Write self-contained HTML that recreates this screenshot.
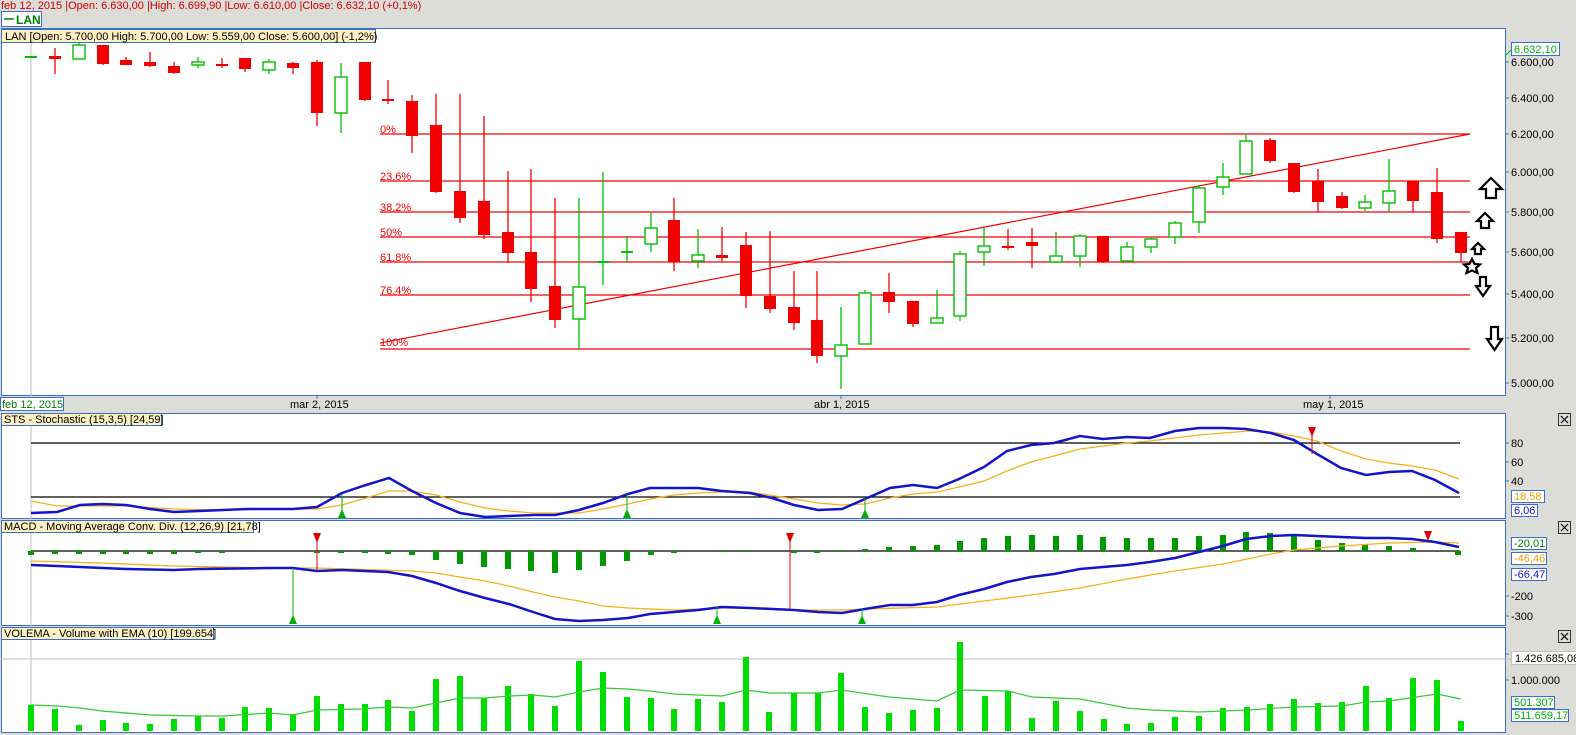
<!DOCTYPE html>
<html><head><meta charset="utf-8"><style>
html,body{margin:0;padding:0;background:#dcdcd8;width:1576px;height:735px;overflow:hidden}
svg{display:block;font-family:"Liberation Sans",sans-serif}
.r{fill:#f00000}.rw{stroke:#f00000;stroke-width:1.3}
.g{fill:#fff;stroke:#00c000;stroke-width:1.4}.gw{stroke:#00c000;stroke-width:1.3}
.gf{fill:#00c000}
.fib{stroke:#f00000;stroke-width:1.2}
.ft{fill:#f00000;font-size:11px}
.ax{font-size:11px;fill:#000}
.vb{fill:#00dd00}
.mh{fill:#009900}
</style></head><body>
<svg width="1576" height="735" viewBox="0 0 1576 735">
<!-- top text -->
<text x="1" y="9" font-size="11" fill="#d00000">feb 12, 2015 |Open: 6.630,00 |High: 6.699,90 |Low: 6.610,00 |Close: 6.632,10 (+0,1%)</text>
<rect x="1.5" y="11.5" width="40" height="15" fill="#fff" stroke="#3a6fc9"/>
<line x1="4" y1="19" x2="14" y2="19" stroke="#008000" stroke-width="1.5"/>
<text x="16" y="24" font-size="12" font-weight="bold" fill="#008000">LAN</text>

<!-- main panel -->
<rect x="1.5" y="28.5" width="1504" height="367" fill="#fff" stroke="#3a6fc9"/>
<line x1="31" y1="40" x2="31" y2="396" stroke="#c0c0c0"/>
<!-- fib lines -->
<g class="fib">
<line x1="380" y1="134" x2="1470" y2="134"/><line x1="380" y1="181" x2="1470" y2="181"/>
<line x1="380" y1="212" x2="1470" y2="212"/><line x1="380" y1="237" x2="1470" y2="237"/>
<line x1="380" y1="262" x2="1470" y2="262"/><line x1="380" y1="295" x2="1470" y2="295"/>
<line x1="380" y1="349" x2="1470" y2="349"/><line x1="380" y1="343" x2="1470" y2="134"/>
</g>
<g class="ft">
<text x="380" y="133">0%</text><text x="380" y="180">23,6%</text><text x="380" y="211">38,2%</text>
<text x="380" y="236">50%</text><text x="380" y="261">61,8%</text><text x="380" y="294">76,4%</text><text x="380" y="346">100%</text>
</g>
<!-- candles -->
<g>
<rect x="25" y="56" width="12" height="2" class="gf"/>
<line x1="55" y1="48" x2="55" y2="74" class="rw"/><rect x="49" y="56" width="12" height="3" class="r"/>
<line x1="79" y1="43" x2="79" y2="59" class="gw"/><rect x="73" y="45" width="12" height="14" class="g"/>
<line x1="103" y1="45" x2="103" y2="65" class="rw"/><rect x="97" y="45" width="12" height="19" class="r"/>
<line x1="126" y1="57" x2="126" y2="65" class="rw"/><rect x="120" y="60" width="12" height="5" class="r"/>
<line x1="150" y1="52" x2="150" y2="67" class="rw"/><rect x="144" y="62" width="12" height="4" class="r"/>
<line x1="174" y1="62" x2="174" y2="74" class="rw"/><rect x="168" y="66" width="12" height="7" class="r"/>
<line x1="198" y1="57" x2="198" y2="68" class="gw"/><rect x="192" y="62" width="12" height="3" class="g"/>
<line x1="222" y1="58" x2="222" y2="68" class="rw"/><rect x="216" y="64" width="12" height="2" class="r"/>
<line x1="245" y1="58" x2="245" y2="72" class="rw"/><rect x="239" y="58" width="12" height="11" class="r"/>
<line x1="269" y1="59" x2="269" y2="74" class="gw"/><rect x="263" y="62" width="12" height="8" class="g"/>
<line x1="293" y1="62" x2="293" y2="74" class="rw"/><rect x="287" y="63" width="12" height="5" class="r"/>
<line x1="317" y1="60" x2="317" y2="126" class="rw"/><rect x="311" y="62" width="12" height="51" class="r"/>
<line x1="341" y1="63" x2="341" y2="133" class="gw"/><rect x="335" y="77" width="12" height="36" class="g"/>
<line x1="365" y1="62" x2="365" y2="101" class="rw"/><rect x="359" y="62" width="12" height="38" class="r"/>
<line x1="388" y1="80" x2="388" y2="104" class="rw"/><rect x="382" y="99" width="12" height="2" class="r"/>
<line x1="412" y1="95" x2="412" y2="153" class="rw"/><rect x="406" y="101" width="12" height="35" class="r"/>
<line x1="436" y1="94" x2="436" y2="193" class="rw"/><rect x="430" y="125" width="12" height="67" class="r"/>
<line x1="460" y1="94" x2="460" y2="223" class="rw"/><rect x="454" y="191" width="12" height="27" class="r"/>
<line x1="484" y1="116" x2="484" y2="239" class="rw"/><rect x="478" y="201" width="12" height="34" class="r"/>
<line x1="508" y1="171" x2="508" y2="263" class="rw"/><rect x="502" y="232" width="12" height="21" class="r"/>
<line x1="531" y1="169" x2="531" y2="302" class="rw"/><rect x="525" y="252" width="12" height="37" class="r"/>
<line x1="555" y1="198" x2="555" y2="328" class="rw"/><rect x="549" y="286" width="12" height="34" class="r"/>
<line x1="579" y1="198" x2="579" y2="349" class="gw"/><rect x="573" y="287" width="12" height="32" class="g"/>
<line x1="603" y1="172" x2="603" y2="285" class="gw"/><rect x="597" y="261" width="12" height="2" class="gf"/>
<line x1="627" y1="236" x2="627" y2="262" class="gw"/><rect x="621" y="251" width="12" height="2" class="gf"/>
<line x1="651" y1="213" x2="651" y2="252" class="gw"/><rect x="645" y="228" width="12" height="16" class="g"/>
<line x1="674" y1="198" x2="674" y2="271" class="rw"/><rect x="668" y="220" width="12" height="42" class="r"/>
<line x1="698" y1="229" x2="698" y2="268" class="gw"/><rect x="692" y="255" width="12" height="6" class="g"/>
<line x1="722" y1="227" x2="722" y2="262" class="rw"/><rect x="716" y="255" width="12" height="3" class="r"/>
<line x1="746" y1="232" x2="746" y2="308" class="rw"/><rect x="740" y="245" width="12" height="51" class="r"/>
<line x1="770" y1="231" x2="770" y2="313" class="rw"/><rect x="764" y="296" width="12" height="13" class="r"/>
<line x1="794" y1="271" x2="794" y2="330" class="rw"/><rect x="788" y="307" width="12" height="16" class="r"/>
<line x1="817" y1="271" x2="817" y2="363" class="rw"/><rect x="811" y="320" width="12" height="36" class="r"/>
<line x1="841" y1="307" x2="841" y2="389" class="gw"/><rect x="835" y="345" width="12" height="11" class="g"/>
<line x1="865" y1="290" x2="865" y2="344" class="gw"/><rect x="859" y="293" width="12" height="51" class="g"/>
<line x1="889" y1="273" x2="889" y2="313" class="rw"/><rect x="883" y="292" width="12" height="10" class="r"/>
<line x1="913" y1="301" x2="913" y2="327" class="rw"/><rect x="907" y="301" width="12" height="23" class="r"/>
<line x1="937" y1="290" x2="937" y2="323" class="gw"/><rect x="931" y="318" width="12" height="5" class="g"/>
<line x1="960" y1="251" x2="960" y2="321" class="gw"/><rect x="954" y="254" width="12" height="62" class="g"/>
<line x1="984" y1="228" x2="984" y2="266" class="gw"/><rect x="978" y="246" width="12" height="6" class="g"/>
<line x1="1008" y1="229" x2="1008" y2="250" class="rw"/><rect x="1002" y="246" width="12" height="2" class="r"/>
<line x1="1032" y1="228" x2="1032" y2="268" class="rw"/><rect x="1026" y="242" width="12" height="4" class="r"/>
<line x1="1056" y1="232" x2="1056" y2="262" class="gw"/><rect x="1050" y="256" width="12" height="6" class="g"/>
<line x1="1080" y1="234" x2="1080" y2="267" class="gw"/><rect x="1074" y="236" width="12" height="20" class="g"/>
<line x1="1103" y1="236" x2="1103" y2="263" class="rw"/><rect x="1097" y="236" width="12" height="26" class="r"/>
<line x1="1127" y1="242" x2="1127" y2="261" class="gw"/><rect x="1121" y="247" width="12" height="14" class="g"/>
<line x1="1151" y1="238" x2="1151" y2="253" class="gw"/><rect x="1145" y="239" width="12" height="8" class="g"/>
<line x1="1175" y1="221" x2="1175" y2="244" class="gw"/><rect x="1169" y="223" width="12" height="14" class="g"/>
<line x1="1199" y1="185" x2="1199" y2="233" class="gw"/><rect x="1193" y="188" width="12" height="34" class="g"/>
<line x1="1223" y1="163" x2="1223" y2="195" class="gw"/><rect x="1217" y="177" width="12" height="10" class="g"/>
<line x1="1246" y1="135" x2="1246" y2="174" class="gw"/><rect x="1240" y="141" width="12" height="33" class="g"/>
<line x1="1270" y1="138" x2="1270" y2="163" class="rw"/><rect x="1264" y="140" width="12" height="21" class="r"/>
<line x1="1294" y1="163" x2="1294" y2="193" class="rw"/><rect x="1288" y="163" width="12" height="29" class="r"/>
<line x1="1318" y1="169" x2="1318" y2="212" class="rw"/><rect x="1312" y="181" width="12" height="21" class="r"/>
<line x1="1342" y1="192" x2="1342" y2="209" class="rw"/><rect x="1336" y="196" width="12" height="12" class="r"/>
<line x1="1365" y1="195" x2="1365" y2="211" class="gw"/><rect x="1359" y="202" width="12" height="6" class="g"/>
<line x1="1389" y1="159" x2="1389" y2="212" class="gw"/><rect x="1383" y="191" width="12" height="12" class="g"/>
<line x1="1413" y1="181" x2="1413" y2="212" class="rw"/><rect x="1407" y="181" width="12" height="20" class="r"/>
<line x1="1437" y1="168" x2="1437" y2="243" class="rw"/><rect x="1431" y="192" width="12" height="47" class="r"/>
<line x1="1461" y1="232" x2="1461" y2="262" class="rw"/><rect x="1455" y="232" width="12" height="21" class="r"/>
</g>
<!-- arrow icons -->
<g fill="#fff" stroke="#000" stroke-width="2.2" stroke-linejoin="miter">
<polygon points="1491,178 1502,189 1496,189 1496,198 1486,198 1486,189 1480,189"/>
<polygon points="1485,213 1493,221 1489,221 1489,228 1481,228 1481,221 1477,221"/>
<polygon points="1478,243 1484,249 1481,249 1481,254 1475,254 1475,249 1472,249"/>
<polygon points="1472,259 1474.5,264 1480,264.5 1476,268 1477.5,273 1472,270.5 1466.5,273 1468,268 1464,264.5 1469.5,264"/>
<polygon points="1480,277 1486,277 1486,286 1490,286 1483,296 1476,286 1480,286"/>
<polygon points="1491,327 1498,327 1498,339 1502,339 1494.5,350 1487,339 1491,339"/>
</g>
<!-- info label -->
<rect x="1.5" y="29.5" width="374" height="13" fill="#fdf1c4" stroke="#3a6fc9"/>
<text x="5" y="40" font-size="11" fill="#000">LAN [Open: 5.700,00  High: 5.700,00  Low: 5.559,00  Close: 5.600,00] (-1,2%)</text>
<!-- right axis main -->
<g stroke="#3a6fc9"><line x1="1505" y1="62" x2="1509" y2="62"/><line x1="1505" y1="98" x2="1509" y2="98"/><line x1="1505" y1="134" x2="1509" y2="134"/><line x1="1505" y1="172" x2="1509" y2="172"/><line x1="1505" y1="212" x2="1509" y2="212"/><line x1="1505" y1="252" x2="1509" y2="252"/><line x1="1505" y1="294" x2="1509" y2="294"/><line x1="1505" y1="338" x2="1509" y2="338"/><line x1="1505" y1="383" x2="1509" y2="383"/></g>
<g class="ax"><text x="1511" y="66">6.600,00</text><text x="1511" y="102">6.400,00</text><text x="1511" y="138">6.200,00</text><text x="1511" y="176">6.000,00</text><text x="1511" y="216">5.800,00</text><text x="1511" y="256">5.600,00</text><text x="1511" y="298">5.400,00</text><text x="1511" y="342">5.200,00</text><text x="1511" y="387">5.000,00</text></g>
<line x1="1505" y1="56" x2="1511" y2="50" stroke="#00c000"/>
<rect x="1511.5" y="42.5" width="48" height="13" fill="#fff" stroke="#3a6fc9"/>
<text x="1514" y="53" font-size="11" fill="#00b000">6.632,10</text>
<!-- date axis -->
<g stroke="#3a6fc9"><line x1="317" y1="395" x2="317" y2="399"/><line x1="841" y1="395" x2="841" y2="399"/><line x1="1330" y1="395" x2="1330" y2="399"/></g>
<rect x="0.5" y="397.5" width="63" height="13" fill="#fff" stroke="#3a6fc9"/>
<text x="2" y="408" font-size="11" fill="#008000">feb 12, 2015</text>
<text x="290" y="408" class="ax">mar 2, 2015</text>
<text x="814" y="408" class="ax">abr 1, 2015</text>
<text x="1303" y="408" class="ax">may 1, 2015</text>

<!-- STS panel -->
<rect x="1.5" y="413.5" width="1504" height="105" fill="#fff" stroke="#3a6fc9"/>
<line x1="31" y1="414" x2="31" y2="519" stroke="#c0c0c0"/>
<line x1="31" y1="443" x2="1460" y2="443" stroke="#000" stroke-width="1.3"/>
<line x1="31" y1="497" x2="1460" y2="497" stroke="#000" stroke-width="1.3"/>
<polyline fill="none" stroke="#f5b01c" stroke-width="1.3" points="31,501 57,506 126,506 174,509 220,510 293,509 317,509 342,505 366,498 389,491 412,491 436,495 460,502 485,508 509,511 533,513 579,513 603,509 628,504 650,499 674,495 698,493 722,492 750,492 794,499 818,503 842,505 865,504 890,498 913,494 937,492 959,487 984,481 1007,471 1031,462 1054,456 1080,449 1127,443 1150,441 1199,435 1249,431 1271,432 1294,436 1317,441 1341,451 1366,459 1389,463 1412,466 1435,470 1459,479"/>
<polyline fill="none" stroke="#1414c8" stroke-width="2.5" points="31,513 57,512 80,505 102,504 126,505 150,509 174,512 199,511 223,510 247,509 269,509 293,509 317,507 342,493 366,485 389,478 412,491 436,503 460,513 485,517 509,516 533,515 555,515 579,510 603,503 628,494 650,488 674,488 698,488 722,491 750,493 772,498 794,505 818,510 842,509 865,499 890,488 913,485 937,488 959,479 984,467 1007,451 1031,445 1054,443 1080,436 1103,439 1127,437 1150,438 1175,431 1199,428 1223,428 1246,429 1271,433 1294,440 1317,454 1341,468 1366,475 1389,472 1412,471 1435,480 1459,493"/>
<g stroke="#00b000"><line x1="342" y1="494" x2="342" y2="512"/><line x1="627" y1="494" x2="627" y2="512"/><line x1="865" y1="498" x2="865" y2="512"/></g>
<g fill="#00b000"><polygon points="342,509 338,518 346,518"/><polygon points="627,509 623,518 631,518"/><polygon points="865,509 861,518 869,518"/></g>
<line x1="1312" y1="432" x2="1312" y2="454" stroke="#e00000"/><polygon points="1308,427 1316,427 1312,437" fill="#e00000"/>
<rect x="1.5" y="413.5" width="160" height="12" fill="#fdf1c4" stroke="#3a6fc9"/>
<text x="4" y="423" font-size="11">STS - Stochastic (15,3,5) [24,59]</text>
<g stroke="#3a6fc9"><line x1="1505" y1="443" x2="1509" y2="443"/><line x1="1505" y1="462" x2="1509" y2="462"/><line x1="1505" y1="481" x2="1509" y2="481"/></g>
<g class="ax"><text x="1511" y="447">80</text><text x="1511" y="466">60</text><text x="1511" y="485">40</text></g>
<rect x="1511.5" y="490.5" width="33" height="12" fill="#fff" stroke="#3a6fc9"/><text x="1514" y="500" font-size="11" fill="#f0a000">18,58</text>
<rect x="1511.5" y="504.5" width="26" height="12" fill="#fff" stroke="#3a6fc9"/><text x="1514" y="514" font-size="11" fill="#1414c8">6,06</text>

<!-- MACD panel -->
<rect x="1.5" y="520.5" width="1504" height="105" fill="#fff" stroke="#3a6fc9"/>
<line x1="31" y1="521" x2="31" y2="626" stroke="#c0c0c0"/>
<line x1="31" y1="551" x2="1460" y2="551" stroke="#000" stroke-width="1.3"/>
<g class="mh">
<rect x="28" y="551" width="6" height="4"/><rect x="52" y="551" width="6" height="3"/><rect x="76" y="551" width="6" height="3"/><rect x="100" y="551" width="6" height="3"/><rect x="123" y="551" width="6" height="3"/><rect x="147" y="551" width="6" height="3"/><rect x="171" y="551" width="6" height="3"/><rect x="195" y="551" width="6" height="2"/><rect x="219" y="551" width="6" height="2"/>
<rect x="314" y="551" width="6" height="2"/><rect x="338" y="551" width="6" height="2"/><rect x="362" y="551" width="6" height="2"/><rect x="385" y="551" width="6" height="3"/><rect x="409" y="551" width="6" height="4"/><rect x="433" y="551" width="6" height="9"/><rect x="457" y="551" width="6" height="13"/><rect x="481" y="551" width="6" height="16"/><rect x="505" y="551" width="6" height="18"/><rect x="528" y="551" width="6" height="20"/><rect x="552" y="551" width="6" height="22"/><rect x="576" y="551" width="6" height="19"/><rect x="600" y="551" width="6" height="15"/><rect x="624" y="551" width="6" height="10"/><rect x="648" y="551" width="6" height="4"/><rect x="671" y="551" width="6" height="2"/>
<rect x="719" y="550" width="6" height="1"/><rect x="743" y="550" width="6" height="1"/><rect x="791" y="551" width="6" height="2"/><rect x="814" y="551" width="6" height="2"/><rect x="838" y="550" width="6" height="1"/>
<rect x="862" y="549" width="6" height="2"/><rect x="886" y="547" width="6" height="4"/><rect x="910" y="546" width="6" height="5"/><rect x="934" y="545" width="6" height="6"/><rect x="957" y="541" width="6" height="10"/><rect x="981" y="538" width="6" height="13"/><rect x="1005" y="536" width="6" height="15"/><rect x="1029" y="535" width="6" height="16"/><rect x="1053" y="536" width="6" height="15"/><rect x="1077" y="535" width="6" height="16"/><rect x="1100" y="537" width="6" height="14"/><rect x="1124" y="538" width="6" height="13"/><rect x="1148" y="538" width="6" height="13"/><rect x="1172" y="538" width="6" height="13"/><rect x="1196" y="536" width="6" height="15"/><rect x="1220" y="535" width="6" height="16"/><rect x="1243" y="532" width="6" height="19"/><rect x="1267" y="533" width="6" height="18"/><rect x="1291" y="536" width="6" height="15"/><rect x="1315" y="540" width="6" height="11"/><rect x="1339" y="543" width="6" height="8"/><rect x="1362" y="544" width="6" height="7"/><rect x="1386" y="546" width="6" height="5"/><rect x="1410" y="548" width="6" height="3"/><rect x="1455" y="551" width="6" height="4"/>
</g>
<polyline fill="none" stroke="#f5b01c" stroke-width="1.3" points="31,561 102,563 174,566 269,568 317,568 412,571 436,573 460,577 485,581 509,586 533,592 555,597 579,601 603,606 628,608 674,610 722,608 746,608 794,610 842,610 865,609 937,607 984,601 1031,595 1080,588 1127,579 1175,571 1223,564 1271,554 1294,550 1341,546 1389,543 1435,542 1459,543"/>
<polyline fill="none" stroke="#1414c8" stroke-width="2.5" points="31,565 57,566 126,569 174,570 199,569 269,568 293,568 317,571 342,570 388,572 412,576 436,583 460,591 485,598 509,604 533,612 555,619 579,621 603,620 628,618 650,614 674,612 698,610 722,607 750,608 794,610 818,612 842,613 865,609 890,605 913,605 937,602 959,595 984,589 1007,582 1031,577 1054,574 1080,569 1103,567 1127,565 1150,562 1175,558 1199,552 1223,546 1246,539 1271,536 1294,535 1317,536 1341,537 1366,538 1389,538 1412,539 1435,542 1459,547"/>
<g stroke="#00b000"><line x1="293" y1="568" x2="293" y2="618"/><line x1="717" y1="607" x2="717" y2="618"/><line x1="862" y1="609" x2="862" y2="618"/></g>
<g fill="#00b000"><polygon points="293,615 289,624 297,624"/><polygon points="717,615 713,624 721,624"/><polygon points="862,615 858,624 866,624"/></g>
<g stroke="#e00000"><line x1="317" y1="538" x2="317" y2="571"/><line x1="790" y1="538" x2="790" y2="610"/><line x1="1428" y1="536" x2="1428" y2="541"/></g>
<g fill="#e00000"><polygon points="313,533 321,533 317,543"/><polygon points="786,533 794,533 790,543"/><polygon points="1424,531 1432,531 1428,541"/></g>
<rect x="1.5" y="520.5" width="252" height="12" fill="#fdf1c4" stroke="#3a6fc9"/>
<text x="4" y="530" font-size="11">MACD - Moving Average Conv. Div. (12,26,9) [21,78]</text>
<g stroke="#3a6fc9"><line x1="1505" y1="596" x2="1509" y2="596"/><line x1="1505" y1="616" x2="1509" y2="616"/></g>
<g class="ax"><text x="1511" y="600">-200</text><text x="1511" y="620">-300</text></g>
<rect x="1511.5" y="537.5" width="35" height="12" fill="#fff" stroke="#3a6fc9"/><text x="1514" y="547" font-size="11" fill="#008000">-20,01</text>
<rect x="1511.5" y="552.5" width="35" height="12" fill="#fff" stroke="#3a6fc9"/><text x="1514" y="562" font-size="11" fill="#f0a000">-46,46</text>
<rect x="1511.5" y="568.5" width="35" height="12" fill="#fff" stroke="#3a6fc9"/><text x="1514" y="578" font-size="11" fill="#1414c8">-66,47</text>

<!-- Volume panel -->
<rect x="1.5" y="627.5" width="1504" height="105" fill="#fff" stroke="#3a6fc9"/>
<line x1="31" y1="628" x2="31" y2="733" stroke="#c0c0c0"/>
<line x1="1" y1="659" x2="1511" y2="659" stroke="#c0c0c0"/>
<g class="vb">
<rect x="28" y="705" width="6" height="26"/><rect x="52" y="709" width="6" height="22"/><rect x="76" y="725" width="6" height="6"/><rect x="100" y="720" width="6" height="11"/><rect x="123" y="723" width="6" height="8"/><rect x="147" y="724" width="6" height="7"/><rect x="171" y="719" width="6" height="12"/><rect x="195" y="716" width="6" height="15"/><rect x="219" y="718" width="6" height="13"/><rect x="242" y="707" width="6" height="24"/><rect x="266" y="708" width="6" height="23"/><rect x="290" y="714" width="6" height="17"/><rect x="314" y="696" width="6" height="35"/><rect x="338" y="704" width="6" height="27"/><rect x="362" y="704" width="6" height="27"/><rect x="385" y="700" width="6" height="31"/><rect x="409" y="711" width="6" height="20"/><rect x="433" y="679" width="6" height="52"/><rect x="457" y="676" width="6" height="55"/><rect x="481" y="698" width="6" height="33"/><rect x="505" y="686" width="6" height="45"/><rect x="528" y="694" width="6" height="37"/><rect x="552" y="706" width="6" height="25"/><rect x="576" y="661" width="6" height="70"/><rect x="600" y="672" width="6" height="59"/><rect x="624" y="697" width="6" height="34"/><rect x="648" y="698" width="6" height="33"/><rect x="671" y="709" width="6" height="22"/><rect x="695" y="699" width="6" height="32"/><rect x="719" y="702" width="6" height="29"/><rect x="743" y="657" width="6" height="74"/>
<rect x="766" y="712" width="6" height="19"/><rect x="791" y="693" width="6" height="38"/><rect x="815" y="693" width="6" height="38"/><rect x="838" y="673" width="6" height="58"/><rect x="862" y="707" width="6" height="24"/><rect x="886" y="713" width="6" height="18"/><rect x="910" y="710" width="6" height="21"/><rect x="934" y="708" width="6" height="23"/><rect x="957" y="642" width="6" height="89"/><rect x="982" y="696" width="6" height="35"/><rect x="1005" y="691" width="6" height="40"/><rect x="1029" y="718" width="6" height="13"/><rect x="1053" y="701" width="6" height="30"/><rect x="1077" y="711" width="6" height="20"/><rect x="1101" y="719" width="6" height="12"/><rect x="1124" y="724" width="6" height="7"/><rect x="1148" y="723" width="6" height="8"/><rect x="1172" y="717" width="6" height="14"/><rect x="1196" y="716" width="6" height="15"/><rect x="1220" y="708" width="6" height="23"/><rect x="1244" y="707" width="6" height="24"/><rect x="1267" y="704" width="6" height="27"/><rect x="1291" y="699" width="6" height="32"/><rect x="1315" y="703" width="6" height="28"/><rect x="1339" y="702" width="6" height="29"/><rect x="1363" y="686" width="6" height="45"/><rect x="1386" y="698" width="6" height="33"/><rect x="1410" y="678" width="6" height="53"/><rect x="1434" y="680" width="6" height="51"/><rect x="1458" y="721" width="6" height="10"/>
</g>
<polyline fill="none" stroke="#33cc33" stroke-width="1.3" points="31,705 57,706 80,708 102,711 150,715 199,716 223,716 269,713 293,715 317,710 362,709 388,707 412,708 436,703 460,698 485,698 509,696 533,695 555,697 579,692 603,688 628,689 650,691 674,694 722,696 746,690 769,693 818,693 841,690 889,697 937,701 960,690 1008,691 1032,697 1080,699 1127,708 1151,710 1199,712 1247,710 1294,707 1342,706 1366,702 1389,701 1437,694 1461,699"/>
<rect x="1.5" y="627.5" width="212" height="12" fill="#fdf1c4" stroke="#3a6fc9"/>
<text x="4" y="637" font-size="11">VOLEMA - Volume with EMA (10) [199.654]</text>
<g stroke="#3a6fc9"><line x1="1505" y1="654" x2="1509" y2="654"/><line x1="1505" y1="680" x2="1509" y2="680"/></g>
<rect x="1511.5" y="651.5" width="66" height="13" fill="#fff" stroke="#c0c0c0"/><text x="1515" y="662" font-size="11">1.426.685,08</text>
<text x="1511" y="684" class="ax">1.000.000</text>
<rect x="1511.5" y="696.5" width="43" height="12" fill="#fff" stroke="#3a6fc9"/><text x="1514" y="706" font-size="11" fill="#00b000">501.307</text>
<rect x="1511.5" y="709.5" width="57" height="12" fill="#fff" stroke="#3a6fc9"/><text x="1514" y="719" font-size="11" fill="#00b000">511.659,17</text>

<!-- close buttons -->
<g fill="#dcdcd8" stroke="#333">
<rect x="1558.5" y="413.5" width="12" height="12"/><rect x="1558.5" y="521.5" width="12" height="12"/><rect x="1558.5" y="630.5" width="12" height="12"/>
</g>
<g stroke="#000" stroke-width="1.2">
<path d="M1561 416 L1568 423 M1568 416 L1561 423"/><path d="M1561 524 L1568 531 M1568 524 L1561 531"/><path d="M1561 633 L1568 640 M1568 633 L1561 640"/>
</g>
</svg>
</body></html>
